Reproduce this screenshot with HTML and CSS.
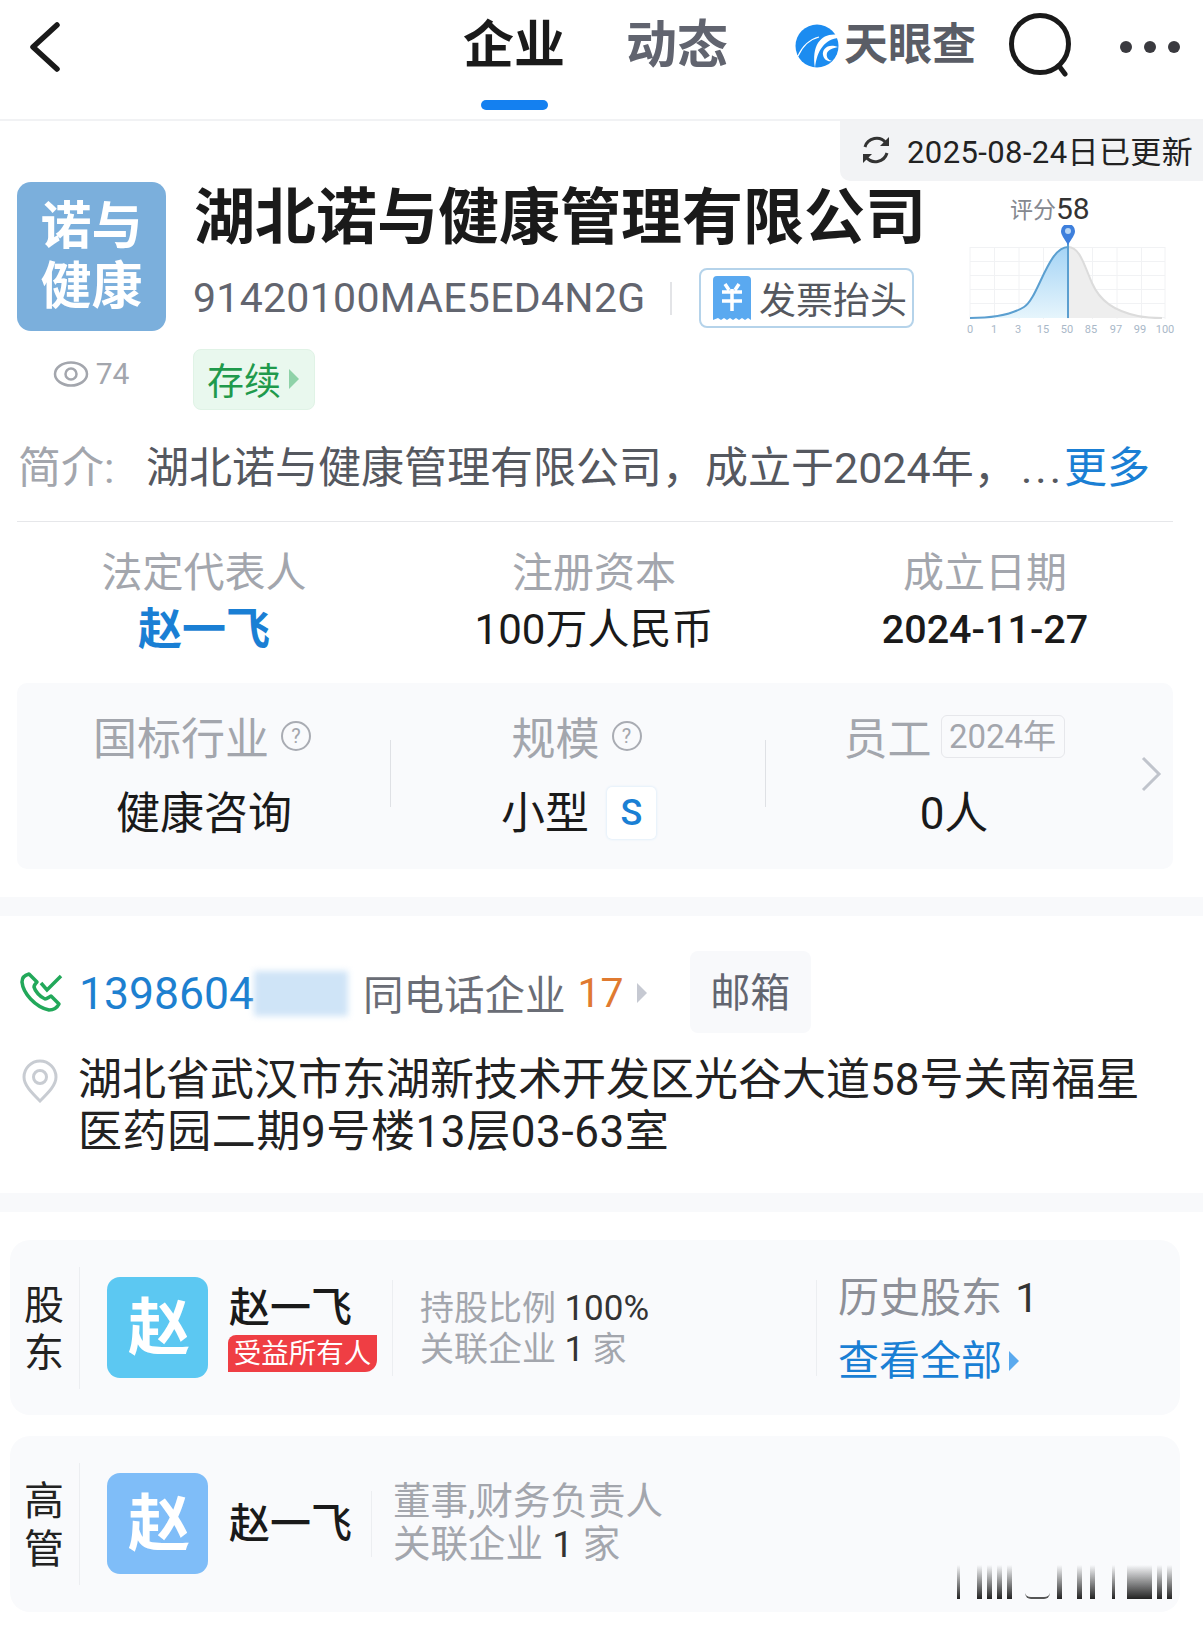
FILE: index.html
```html
<!DOCTYPE html>
<html>
<head>
  <title>湖北诺与健康管理有限公司</title>
  <link rel="stylesheet" href="styles.css">
</head>
<body>
  <div class="page">
    <div class="header">
      <svg class="back-icon" width="34" height="50" viewBox="0 0 34 50"><path d="M29 3 L5 25 L29 47" fill="none" stroke="#1a1a1a" stroke-width="5.5" stroke-linecap="round" stroke-linejoin="round"/></svg>
      <div class="tab tab-active"><span>企业</span><i></i></div>
      <div class="tab"><span>动态</span></div>
      <svg class="brand-icon" width="44" height="46" viewBox="0 0 44 46">
        <circle cx="22" cy="23" r="21.5" fill="#1c8cf0"/>
        <path d="M44 12 C28 9 16 20 20 45 C22 27 30 16 44 15 Z" fill="#fff"/>
        <path d="M43 24 C33 20 27 26 28 32 C29 37 33 39 37 38 C33 37 31 34 32 30 C33 27 38 25 43 24 Z" fill="#fff"/>
        <path d="M3 33 C8 22 16 16 24 14" fill="none" stroke="#fff" stroke-width="1.2"/>
      </svg>
      <div class="brand-name">天眼查</div>
      <svg class="search-icon" width="66" height="66" viewBox="0 0 66 66"><circle cx="32" cy="32" r="28.500" fill="none" stroke="#1a1a1a" stroke-width="5"/><path d="M51 54 L57 62" stroke="#1a1a1a" stroke-width="5" stroke-linecap="round"/></svg>
      <div class="more-dots"><i></i><i></i><i></i></div>
    </div>

    <div class="update-row">
      <div class="update-tag">
        <svg width="32" height="32" viewBox="0 0 32 32"><path d="M5 13 A12 12 0 0 1 26 9" fill="none" stroke="#333" stroke-width="3"/><path d="M27 19 A12 12 0 0 1 6 23" fill="none" stroke="#333" stroke-width="3"/><path d="M29 3 L29 12 L20 12 Z" fill="#333"/><path d="M3 29 L3 20 L12 20 Z" fill="#333"/></svg>
        <span>2025-08-24日已更新</span>
      </div>
    </div>

    <div class="company">
      <div class="company-left">
        <div class="company-logo">诺与<br>健康</div>
        <div class="views">
          <svg width="36" height="28" viewBox="0 0 36 28"><ellipse cx="18" cy="14" rx="16" ry="11.5" fill="none" stroke="#a3a6ad" stroke-width="2.5"/><circle cx="18" cy="14" r="5.5" fill="none" stroke="#a3a6ad" stroke-width="2.5"/></svg>
          <span>74</span>
        </div>
      </div>
      <div class="company-main">
        <div class="company-name">湖北诺与健康管理有限公司</div>
        <div class="code-row">
          <span class="credit-code">91420100MAE5ED4N2G</span>
          <i class="code-sep"></i>
          <div class="invoice-btn">
            <svg width="38" height="44" viewBox="0 0 38 44"><path d="M4 0 H34 A4 4 0 0 1 38 4 V44 L35 42 L32 44 L29 42 L26 44 L23 42 L20 44 L17 42 L14 44 L11 42 L8 44 L5 42 L0 44 V4 A4 4 0 0 1 4 0 Z" fill="#5aa9f0"/><path d="M12 8 L16 14 M26 8 L22 14 M9 16 H29 M9 25 H29 M19 13 V35" fill="none" stroke="#fff" stroke-width="3.5"/></svg>
            <span>发票抬头</span>
          </div>
        </div>
        <div class="status-tag"><span>存续</span><i class="arrow arrow-green"></i></div>
      </div>
      <div class="score">
        <div class="score-title"><span>评分</span><b>58</b></div>
        <svg width="220" height="122" viewBox="0 0 220 122">
          <defs>
            <linearGradient id="curveFill" x1="0" y1="0" x2="0" y2="1"><stop offset="0" stop-color="#a5d4f5"/><stop offset="1" stop-color="#e6f5fc"/></linearGradient>
          </defs>
          <path class="chart-grid" d="M6 22.5 H201 M6 36.5 H201 M6 50.5 H201 M6 64.5 H201 M6 78.5 H201 M6 92.5 H201 M6 22 V94 M30.500 22 V94 M55 22 V94 M79.500 22 V94 M104 22 V94 M128.500 22 V94 M153 22 V94 M177.500 22 V94 M201 22 V94"/>
          <path d="M104 22 C116 22 120 40 128 58 C136 76 150 86 174 91 C184 93 192 93 198 93 L104 93 Z" fill="#eeeeee"/>
          <path d="M104 22 C116 22 120 40 128 58 C136 76 150 86 174 91 C184 93 192 93 198 93" fill="none" stroke="#dcdcdc" stroke-width="2"/>
          <path d="M6 93 C22 93 44 92 60 82 C74 74 84 22 104 22 L104 93 Z" fill="url(#curveFill)"/>
          <path d="M6 93 C22 93 44 92 60 82 C74 74 84 22 104 22" fill="none" stroke="#5b9fd0" stroke-width="2"/>
          <path d="M104 18 V93" stroke="#5b9fd0" stroke-width="2"/>
          <path d="M104 20 C100 13 97 10 97 6 A7 7 0 0 1 111 6 C111 10 108 13 104 20 Z" fill="#3e7fdc"/>
          <circle cx="104" cy="6" r="3" fill="#b8d6f5"/>
          <text class="chart-label" x="6" y="108">0</text>
          <text class="chart-label" x="30" y="108">1</text>
          <text class="chart-label" x="54" y="108">3</text>
          <text class="chart-label" x="79" y="108">15</text>
          <text class="chart-label" x="103" y="108">50</text>
          <text class="chart-label" x="127" y="108">85</text>
          <text class="chart-label" x="152" y="108">97</text>
          <text class="chart-label" x="176" y="108">99</text>
          <text class="chart-label" x="201" y="108">100</text>
        </svg>
      </div>
    </div>

    <div class="intro">
      <span class="intro-label">简介:</span>
      <span class="intro-text">湖北诺与健康管理有限公司，成立于2024年，</span>
      <span class="intro-dots">...</span>
      <span class="intro-more">更多</span>
    </div>

    <div class="facts">
      <div class="fact"><div class="fact-label">法定代表人</div><div class="fact-value fact-link">赵一飞</div></div>
      <div class="fact"><div class="fact-label">注册资本</div><div class="fact-value">100万人民币</div></div>
      <div class="fact"><div class="fact-label">成立日期</div><div class="fact-value fact-date">2024-11-27</div></div>
    </div>

    <div class="panel">
      <div class="panel-col panel-col-1">
        <div class="panel-label label-help">国标行业<span class="help">?</span></div>
        <div class="panel-value">健康咨询</div>
      </div>
      <div class="panel-col panel-col-2">
        <div class="panel-label label-help">规模<span class="help">?</span></div>
        <div class="panel-value">小型<span class="size-chip">S</span></div>
      </div>
      <div class="panel-col panel-col-3">
        <div class="panel-label">员工<span class="year-chip">2024年</span></div>
        <div class="panel-value">0人</div>
      </div>
      <svg class="panel-chevron" width="22" height="36" viewBox="0 0 22 36"><path d="M3 2 L19 18 L3 34" fill="none" stroke="#c0c4cc" stroke-width="3"/></svg>
    </div>

    <div class="band band-first"></div>

    <div class="contact">
      <div class="phone-row">
        <svg class="phone-icon" width="44" height="42" viewBox="0 0 44 42"><path d="M9 3 C5 4 2 7 2 11 C3 22 15 36 29 39 C33 39 37 37 39 33 L31 25 C29 26 27 28 25 28 C20 26 15 20 14 16 C14 14 16 12 17 11 Z" fill="none" stroke="#22a85a" stroke-width="3.5" stroke-linejoin="round"/><path d="M21 12 L27 19 L41 5" fill="none" stroke="#22a85a" stroke-width="3.5"/></svg>
        <span class="phone-num">1398604</span>
        <i class="phone-blur"></i>
        <span class="phone-same">同电话企业</span>
        <span class="phone-count">17</span>
        <i class="arrow arrow-gray"></i>
        <div class="mail-chip">邮箱</div>
      </div>
      <div class="address-row">
        <svg class="pin-icon" width="38" height="44" viewBox="0 0 38 44"><path d="M19 42 C10 33 3 26 3 18 A16 16 0 0 1 35 18 C35 26 28 33 19 42 Z" fill="none" stroke="#c8ccd2" stroke-width="3"/><circle cx="19" cy="18" r="6.500" fill="none" stroke="#c8ccd2" stroke-width="3"/></svg>
        <div class="address-text">湖北省武汉市东湖新技术开发区光谷大道58号关南福星<br><span class="address-second">医药园二期9号楼13层03-63室</span></div>
      </div>
    </div>

    <div class="band band-second"></div>

    <div class="card card-holder">
      <div class="card-title">股<br>东</div>
      <div class="avatar avatar-sky">赵</div>
      <div class="person person-holder">
        <div class="person-name">赵一飞</div>
        <div class="owner-tag">受益所有人</div>
      </div>
      <div class="holder-info">
        <div>持股比例 <b>100%</b></div>
        <div>关联企业 <b>1</b> 家</div>
      </div>
      <div class="history">
        <div class="history-count">历史股东 <b>1</b></div>
        <div class="history-link">查看全部<i class="arrow arrow-blue"></i></div>
      </div>
    </div>

    <div class="card card-exec">
      <div class="card-title">高<br>管</div>
      <div class="avatar avatar-blue">赵</div>
      <div class="person person-exec">
        <div class="person-name">赵一飞</div>
      </div>
      <div class="exec-info">
        <div>董事,财务负责人</div>
        <div>关联企业 <b>1</b> 家</div>
      </div>
      <div class="watermark">
        <i class="bar-thin"></i><i class="bar gap-wide"></i><i class="bar"></i><i class="bar"></i><i class="bar"></i>
        <i class="smear"></i>
        <i class="bar gap-small"></i><i class="bar gap-mid"></i><i class="bar gap-back"></i><i class="bar-thin gap-wide"></i><i class="bar-block"></i><i class="bar"></i><i class="bar"></i>
      </div>
    </div>
  </div>
</body>
</html>
```

FILE: styles.css
```css
* {
  box-sizing: border-box;
}
body {
  margin: 0;
  background: #fff;
  font-family: Roboto, "Noto Sans CJK SC", sans-serif;
  color: #1a1a1a;
}
i {
  display: block;
}
.page {
  width: 1203px;
  height: 1628px;
  overflow: hidden;
  position: relative;
}

/* top bar */
.header {
  height: 121px;
  display: flex;
  align-items: flex-start;
  border-bottom: 2px solid #f1f2f4;
}
.back-icon {
  margin: 22px 0 0 28px;
}
.tab {
  width: 104px;
  display: flex;
  flex-direction: column;
  align-items: center;
  font-size: 51px;
  line-height: 50px;
  font-weight: 700;
  color: #61646f;
  padding-top: 21px;
}
.tab-active {
  margin-left: 400px;
  color: #1a1a1a;
}
.tab-active i {
  width: 67px;
  height: 10px;
  margin-top: 29px;
  border-radius: 5px;
  background: #1480f0;
}
.tab + .tab {
  margin-left: 59px;
}
.brand-icon {
  margin: 23px 0 0 66px;
}
.brand-name {
  margin: 20px 0 0 5px;
  font-size: 44px;
  line-height: 50px;
  font-weight: 700;
  color: #5a5d66;
}
.search-icon {
  margin: 12px 0 0 32px;
}
.more-dots {
  display: flex;
  gap: 12px;
  margin: 41px 0 0 46px;
}
.more-dots i {
  width: 12px;
  height: 12px;
  border-radius: 50%;
  background: #3a3a3f;
}

/* updated tag */
.update-row {
  display: flex;
  justify-content: flex-end;
  height: 61px;
}
.update-tag {
  width: 363px;
  height: 60px;
  display: flex;
  align-items: center;
  gap: 15px;
  padding: 0 0 3px 20px;
  background: #f2f3f5;
  border-bottom-left-radius: 10px;
  font-size: 31px;
  letter-spacing: 0.4px;
  color: #222;
  white-space: nowrap;
}

/* company */
.company {
  display: flex;
  height: 228px;
  padding-left: 17px;
  position: relative;
}
.company-left {
  width: 149px;
}
.company-logo {
  width: 149px;
  height: 149px;
  border-radius: 14px;
  background: #7bafdc;
  color: #fff;
  font-size: 51px;
  line-height: 60px;
  font-weight: 700;
  text-align: center;
  padding-top: 15px;
}
.views {
  display: flex;
  align-items: center;
  justify-content: center;
  gap: 7px;
  margin-top: 25px;
  padding-right: 1px;
  font-size: 30px;
  line-height: 36px;
  color: #a3a6ad;
}
.company-main {
  margin-left: 28px;
  width: 750px;
}
.company-name {
  font-size: 61px;
  line-height: 70px;
  font-weight: 700;
  margin-top: 1px;
}
.code-row {
  display: flex;
  align-items: center;
  margin-top: 15px;
  height: 60px;
}
.credit-code {
  width: 452px;
  margin-left: -1px;
  font-size: 41px;
  letter-spacing: 0.3px;
  color: #62656f;
}
.code-sep {
  width: 2px;
  height: 33px;
  margin-left: 25px;
  background: #e3e4e7;
}
.invoice-btn {
  width: 215px;
  height: 60px;
  margin-left: 27px;
  display: flex;
  align-items: center;
  gap: 8px;
  padding-left: 12px;
  border: 2px solid #b5d3ea;
  border-radius: 8px;
  font-size: 37px;
  color: #55585f;
  white-space: nowrap;
}
.status-tag {
  width: 122px;
  height: 61px;
  margin: 21px 0 0 -1px;
  display: flex;
  align-items: center;
  gap: 8px;
  padding: 0 0 1px 13px;
  background: #e9f8ee;
  border: 1px solid #e0f3e6;
  border-radius: 8px;
  font-size: 37px;
  color: #1f9a4c;
}
.arrow {
  width: 0;
  height: 0;
  border-style: solid;
  border-width: 10px 0 10px 10px;
  border-color: transparent;
}
.arrow-green {
  border-left-color: #8fd2a8;
}
.arrow-gray {
  border-left-color: #c6c9d2;
}
.arrow-blue {
  border-left-color: #5aa9ee;
}
.score {
  width: 220px;
  margin-top: 11px;
  margin-left: 20px;
}
.score-title {
  height: 33px;
  margin-left: 46px;
  display: flex;
  align-items: flex-end;
  font-size: 23px;
  line-height: 30px;
  color: #85888f;
}
.score-title b {
  font-size: 30px;
  line-height: 34px;
  font-weight: 400;
  color: #333;
}
.score svg {
  display: block;
  margin-top: -1px;
}
.chart-grid {
  fill: none;
  stroke: #f1f2f4;
  stroke-width: 1;
}
.chart-label {
  font-size: 11px;
  fill: #a9b8c8;
  text-anchor: middle;
}

/* intro */
.intro {
  height: 112px;
  padding: 32px 0 0 1px;
  margin: 0 30px 0 17px;
  display: flex;
  align-items: flex-start;
  border-bottom: 1px solid #e6e7ea;
  font-size: 43px;
  line-height: 52px;
  white-space: nowrap;
}
.intro-label {
  width: 128px;
  color: #a3a6ad;
}
.intro-text {
  color: #55585f;
  width: 875px;
}
.intro-dots {
  color: #55585f;
  width: 43px;
  letter-spacing: 3px;
}
.intro-more {
  color: #1a7fd4;
}

/* legal rep, capital, date */
.facts {
  display: flex;
  height: 161px;
  padding-top: 27px;
}
.fact {
  text-align: center;
}
.fact:nth-child(1) {
  width: 408px;
}
.fact:nth-child(2) {
  width: 372px;
}
.fact:nth-child(3) {
  width: 410px;
}
.fact-label {
  font-size: 41px;
  line-height: 48px;
  color: #a3a6ad;
}
.fact-value {
  font-size: 42px;
  line-height: 48px;
  margin-top: 9px;
  color: #1a1a1a;
}
.fact-link {
  font-size: 44px;
  font-weight: 700;
  color: #1a7fd4;
}
.fact-date {
  font-size: 39.500px;
  font-weight: 500;
}

/* industry panel */
.panel {
  display: flex;
  height: 186px;
  margin: 0 30px 0 17px;
  background: #f9fafc;
  border-radius: 10px;
  position: relative;
}
.panel-col {
  position: relative;
  padding-top: 26px;
  text-align: center;
}
.panel-col-1 {
  width: 374px;
}
.panel-col-2 {
  width: 375px;
}
.panel-col-3 {
  width: 376px;
}
.panel-col-1::after,
.panel-col-2::after {
  content: "";
  position: absolute;
  right: 0;
  top: 57px;
  width: 1px;
  height: 67px;
  background: #dfe1e5;
}
.panel-label {
  display: flex;
  align-items: center;
  justify-content: center;
  height: 54px;
  font-size: 44px;
  color: #a3a6ad;
}
.label-help {
  padding-right: 4px;
}
.panel-value {
  display: flex;
  align-items: center;
  justify-content: center;
  height: 54px;
  margin-top: 20px;
  font-size: 44px;
  color: #1a1a1a;
}
.help {
  width: 30px;
  height: 30px;
  margin-left: 12px;
  border: 2px solid #a9acb3;
  border-radius: 50%;
  font-size: 20px;
  line-height: 26px;
  color: #a3a6ad;
  text-align: center;
}
.year-chip {
  width: 124px;
  height: 43px;
  margin-left: 9px;
  border: 1px solid #e6e7eb;
  border-radius: 6px;
  font-size: 33px;
  line-height: 41px;
  color: #a3a6ad;
  white-space: nowrap;
}
.size-chip {
  width: 49px;
  height: 52px;
  margin: 5px 0 0 18px;
  border-radius: 5px;
  background: #fff;
  box-shadow: 0 0 3px #cfe5f8;
  font-size: 36px;
  line-height: 52px;
  font-weight: 500;
  color: #1a7fd4;
}
.panel-chevron {
  margin-top: 73px;
  margin-left: -2px;
}

.band {
  height: 19px;
  background: #f8f9fb;
}
.band-first {
  margin-top: 28px;
}

/* phone and address */
.contact {
  height: 277px;
  padding-top: 35px;
}
.phone-row {
  display: flex;
  align-items: center;
  height: 82px;
  padding-left: 20px;
}
.phone-num {
  margin: 4px 0 0 15px;
  font-size: 44.500px;
  color: #1d80d0;
}
.phone-blur {
  width: 94px;
  height: 45px;
  margin-top: 2px;
  background: #cfe4f7;
  filter: blur(3px);
}
.phone-same {
  margin-left: 15px;
  font-size: 40.500px;
  color: #6a6d76;
}
.phone-count {
  margin: 2px 0 0 12px;
  font-size: 41px;
  color: #e07a30;
}
.arrow-gray {
  margin: 2px 0 0 13px;
}
.mail-chip {
  width: 121px;
  height: 82px;
  margin-left: 43px;
  border-radius: 8px;
  background: #f8f9fb;
  font-size: 40px;
  line-height: 86px;
  text-align: center;
  color: #62656f;
}
.address-row {
  display: flex;
  align-items: flex-start;
  padding-left: 21px;
  margin-top: 21px;
}
.pin-icon {
  margin-top: 5px;
}
.address-text {
  margin-left: 19px;
  font-size: 44px;
  line-height: 52px;
  color: #222;
  white-space: nowrap;
}
.address-second {
  letter-spacing: 0.6px;
}

/* shareholder and executive cards */
.card {
  display: flex;
  align-items: center;
  margin: 28px 23px 0 10px;
  height: 175px;
  background: #f9fafc;
  border-radius: 20px;
  position: relative;
}
.card-exec {
  margin-top: 21px;
  height: 176px;
}
.card-title {
  width: 70px;
  height: 122px;
  margin-right: 27px;
  padding: 15px 0 0 14px;
  border-right: 1px solid #eceef1;
  font-size: 40px;
  line-height: 48px;
  color: #222;
}
.avatar {
  width: 101px;
  height: 101px;
  padding-left: 3px;
  border-radius: 13px;
  color: #fff;
  font-size: 62px;
  line-height: 103px;
  font-weight: 700;
  text-align: center;
}
.avatar-sky {
  background: #5cc8f2;
}
.avatar-blue {
  margin-top: -2px;
  background: #7fbdf8;
}
.person {
  margin-left: 21px;
  border-right: 1px solid #eceef1;
}
.person-holder {
  width: 164px;
  height: 96px;
  padding-top: 4px;
}
.person-exec {
  width: 143px;
  height: 66px;
  padding-top: 9px;
}
.person-name {
  font-size: 41px;
  line-height: 48px;
  font-weight: 500;
  white-space: nowrap;
}
.owner-tag {
  width: 149px;
  height: 37px;
  margin: 3px 0 0 -1px;
  background: #ef3e44;
  border-radius: 8px 0 12px 0;
  font-size: 27.500px;
  line-height: 37px;
  color: #fff;
  text-align: center;
  white-space: nowrap;
}
.holder-info {
  width: 424px;
  height: 96px;
  padding: 8px 0 0 27px;
  border-right: 1px solid #eceef1;
  font-size: 34px;
  line-height: 40px;
  color: #a3a6ad;
}
.holder-info b {
  font-size: 35px;
}
.holder-info b,
.exec-info b,
.history-count b {
  font-weight: 400;
  color: #333;
}
.history {
  margin-left: 21px;
  margin-top: 4px;
  font-size: 41px;
  line-height: 63px;
}
.history-count {
  color: #8d9098;
}
.history-count b {
  margin-left: 3px;
}
.history-link {
  display: flex;
  align-items: center;
  gap: 7px;
  color: #1a7fd4;
}
.exec-info {
  margin-left: 21px;
  font-size: 37.500px;
  line-height: 43px;
  color: #a3a6ad;
  margin-top: -2px;
}

/* garbled watermark in the corner */
.watermark {
  position: absolute;
  left: 947px;
  top: 129px;
  height: 34px;
  display: flex;
  gap: 5px;
  align-items: flex-end;
  filter: blur(0.6px);
}
.watermark i {
  height: 34px;
  background: linear-gradient(to bottom, rgba(30, 30, 30, 0), #222);
}
.watermark .bar-thin {
  width: 3px;
}
.watermark .bar {
  width: 5px;
}
.watermark .gap-wide {
  margin-left: 12px;
}
.watermark .gap-mid {
  margin-left: 10px;
}
.watermark .gap-small {
  margin-left: 2px;
}
.watermark .gap-back {
  margin-left: 3px;
}
.watermark .bar-block {
  width: 25px;
  margin-left: 7px;
}
.watermark .smear {
  width: 25px;
  height: 6px;
  margin-left: 8px;
  background: none;
  border-bottom: 2px solid #555;
  border-radius: 0 0 14px 14px;
}
```
